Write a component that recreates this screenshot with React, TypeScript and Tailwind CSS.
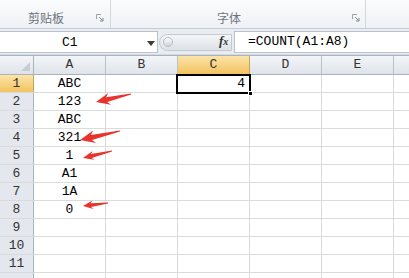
import React from "react";

const cols = ["A", "B", "C", "D", "E", ""];
const colW = [72, 72, 72, 72, 72, 24];
const aVals: Record<number, string> = { 1: "ABC", 2: "123", 3: "ABC", 4: "321", 5: "1", 6: "A1", 7: "1A", 8: "0" };

function arrowPts(tx: number, ty: number, sx: number, sy: number, hl: number, hw: number, sw: number) {
  const dx = sx - tx, dy = sy - ty;
  const len = Math.hypot(dx, dy);
  const ux = dx / len, uy = dy / len;
  const nx = -uy, ny = ux;
  const p = (a: number, b: number) => `${(tx + ux * a + nx * b).toFixed(1)},${(ty + uy * a + ny * b).toFixed(1)}`;
  return [p(0, 0), p(hl, hw), p(hl * 0.78, sw), p(len, 0.6), p(len, -0.6), p(hl * 0.78, -sw), p(hl, -hw)].join(" ");
}

function Launcher() {
  return (
    <svg width="8" height="8" viewBox="0 0 8 8">
      <path d="M0.5 0.5 H5 M0.5 0.5 V5" stroke="#9aa3ad" strokeWidth="1" fill="none" />
      <path d="M3 3 L7 7 M7 4 V7 H4" stroke="#7d8691" strokeWidth="1" fill="none" />
    </svg>
  );
}

export default function App() {
  const mono = { fontFamily: '"Liberation Mono", "DejaVu Sans Mono", monospace' };
  return (
    <div className="relative w-[409px] h-[278px] overflow-hidden bg-white">
      {/* Ribbon */}
      <div className="flex h-[29px] border-b border-[#c6ccd4] bg-gradient-to-b from-[#fbfcfd] to-[#eef1f5]" style={{ fontFamily: '"Noto Sans CJK SC", sans-serif' }}>
        <div className="relative w-[111px] shrink-0 border-r border-[#d3d8de]">
          <span className="absolute left-[28px] top-[10px] text-[12px] leading-[16px] text-[#6d747c]">剪贴板</span>
          <span className="absolute left-[96px] top-[14px] flex"><Launcher /></span>
        </div>
        <div className="relative w-[255px] shrink-0 border-r border-[#d3d8de]">
          <span className="absolute left-[106px] top-[10px] text-[12px] leading-[16px] text-[#6d747c]">字体</span>
          <span className="absolute left-[241px] top-[14px] flex"><Launcher /></span>
        </div>
        <div className="flex-1" />
      </div>

      {/* Formula bar */}
      <div className="flex h-[26px] items-start pt-[2px] bg-[#e9edf2] border-b border-[#d5dae0]">
        <div className="relative w-[158px] shrink-0 h-[22px] bg-white border border-[#b9c2cc] border-l-0" style={mono}>
          <span className="absolute left-[62px] top-[3px] text-[13px] leading-[16px] text-black">C1</span>
          <svg className="absolute left-[147px] top-[9px]" width="8" height="5" viewBox="0 0 8 5">
            <path d="M0 0 H8 L4 5 Z" fill="#3a3a3a" />
          </svg>
        </div>
        <div className="relative w-[76px] shrink-0 h-[22px]">
          <div className="absolute left-[1px] top-[3px] w-[73px] h-[17px] rounded-l-full bg-gradient-to-b from-[#f4f6f8] to-[#dde2e8] border border-[#c3cad2]" />
          <div className="absolute left-[5px] top-[6px] w-[10px] h-[10px] rounded-full bg-gradient-to-b from-[#ffffff] to-[#cfd5dc] border border-[#b5bdc6]" />
          <span className="absolute left-[61px] top-[2px] text-[13px] leading-[16px] italic font-bold text-[#333]" style={{ fontFamily: '"Liberation Serif", serif' }}>f<span className="text-[10px]">x</span></span>
        </div>
        <div className="flex-1 h-[22px] bg-white border border-[#b9c2cc] border-r-0 pl-[13px] flex items-center" style={mono}>
          <span className="text-[13px] leading-[16px] text-black">=COUNT(A1:A8)</span>
        </div>
      </div>

      {/* Grid */}
      <div style={mono}>
        <div className="flex h-[20px] border-y border-[#a9b3be]">
          <div className="relative w-[34px] shrink-0 border-r border-[#a9b3be] bg-gradient-to-b from-[#f3f5f8] to-[#dfe4ea]">
            <svg className="absolute right-[3px] bottom-[3px]" width="9" height="9" viewBox="0 0 9 9">
              <path d="M9 0 V9 H0 Z" fill="#c8cdd3" />
            </svg>
          </div>
          {cols.map((c, i) => (
            <div
              key={i}
              className={`shrink-0 border-r flex items-center justify-center text-[13px] ${c === "C" ? "bg-gradient-to-b from-[#fbe4a8] to-[#f3c35e] border-[#c4a45a] text-[#333]" : "bg-gradient-to-b from-[#f3f5f8] to-[#dfe4ea] border-[#b8c1cb] text-[#333]"}`}
              style={{ width: colW[i] }}
            >
              {c}
            </div>
          ))}
        </div>
        {Array.from({ length: 12 }, (_, r) => r + 1).map((r) => (
          <div key={r} className="flex h-[18px] border-b border-[#d9dbdd]">
            <div className={`w-[34px] shrink-0 border-r flex items-center justify-center text-[13px] text-[#333] ${r === 1 ? "bg-gradient-to-b from-[#fbe4a8] to-[#f3c35e] border-[#c4a45a]" : "bg-[#e4e8ee] border-[#a9b3be]"}`}>
              {r <= 11 ? r : ""}
            </div>
            {cols.map((c, i) => (
              <div
                key={i}
                className={`shrink-0 border-r border-[#d9dbdd] flex items-center text-[13px] text-black pt-[1px] ${c === "C" ? "justify-end pr-[4px]" : "justify-center"}`}
                style={{ width: colW[i] }}
              >
                {c === "A" ? aVals[r] ?? "" : c === "C" && r === 1 ? "4" : ""}
              </div>
            ))}
          </div>
        ))}
      </div>

      {/* Selection box */}
      <div className="absolute left-[176px] top-[74px] w-[75px] h-[20px] border-2 border-black pointer-events-none" />
      <div className="absolute left-[248px] top-[91px] w-[5px] h-[5px] bg-black border border-white pointer-events-none" />

      {/* Red arrows */}
      <svg className="absolute left-0 top-0 pointer-events-none" width="409" height="278" viewBox="0 0 409 278">
        <polygon points={arrowPts(96, 102, 131, 94, 14, 6, 2.4)} fill="#e8352c" />
        <polygon points={arrowPts(80, 140, 120, 131, 15, 6.5, 2.6)} fill="#e8352c" />
        <polygon points={arrowPts(83, 158, 112, 151, 11, 4.5, 2)} fill="#e8352c" />
        <polygon points={arrowPts(83, 206, 108, 203, 10, 4.2, 1.8)} fill="#e8352c" />
      </svg>
    </div>
  );
}
